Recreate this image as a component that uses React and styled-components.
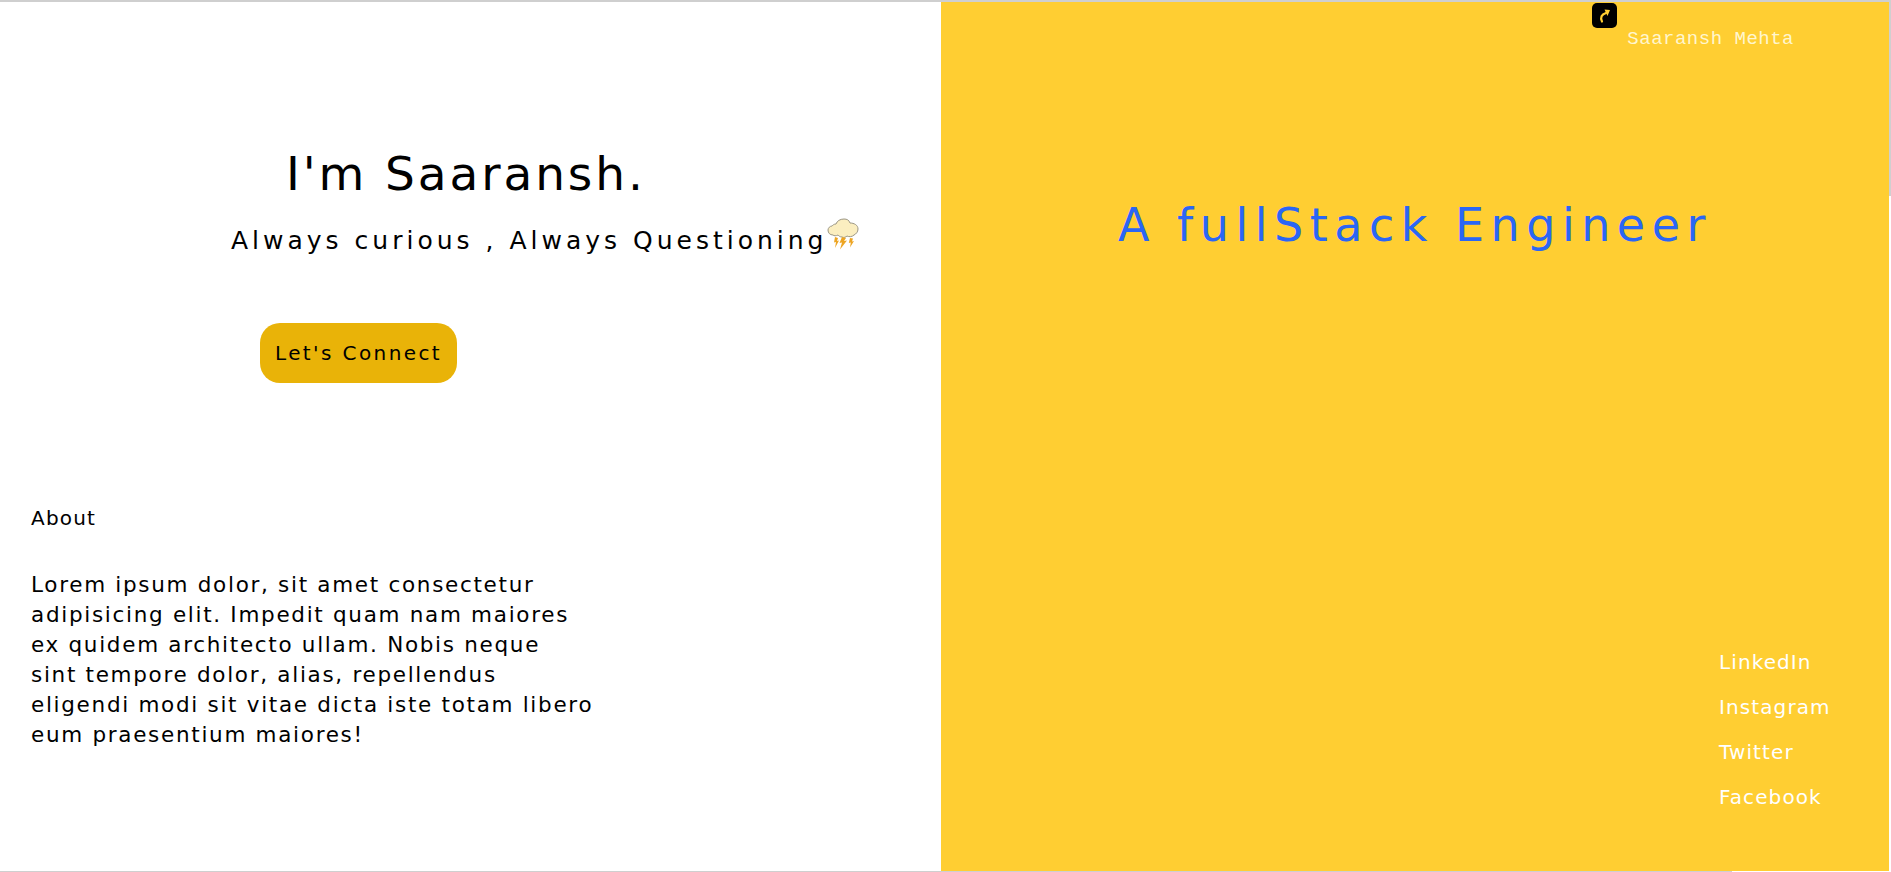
import React from 'react';
import styled, { createGlobalStyle } from 'styled-components';

const GlobalStyle = createGlobalStyle`
  html, body {
    margin: 0;
    padding: 0;
    background: #fff;
    overflow: hidden;
  }

  body {
    font-family: "DejaVu Sans", sans-serif;
  }
`;

const Page = styled.div`
  display: flex;
  flex-direction: column;
  width: 1891px;
  height: 872px;
  box-sizing: border-box;
  border-top: 2px solid #cfcfcf;
`;

const Columns = styled.main`
  flex: 1;
  display: grid;
  grid-template-columns: 941px 1fr 2px;
`;

const BottomTrack = styled.div`
  width: 1732px;
  height: 1px;
  background: #cfcfcf;
`;

const SideTrack = styled.div`
  width: 2px;
  height: 194px;
  background: #cfcfcf;
`;

const Left = styled.section`
  display: flex;
  flex-direction: column;
  color: #000;
`;

const Hero = styled.div`
  display: flex;
  flex-direction: column;
  height: 486px;
  padding-top: 144px;
  box-sizing: border-box;
`;

const Title = styled.h1`
  margin: 0 0 0 286px;
  font-size: 47px;
  line-height: 56px;
  font-weight: 400;
  letter-spacing: 2.9px;
`;

const Tagline = styled.p`
  display: flex;
  align-items: flex-start;
  margin: 21px 0 0 231px;
  font-size: 25px;
  line-height: 36px;
  letter-spacing: 4px;
  white-space: nowrap;
`;

const Storm = styled.svg`
  width: 32px;
  height: 32px;
  margin: -5px 0 0 0;
`;

const ConnectButton = styled.button`
  width: 197px;
  height: 60px;
  margin: 64px 0 0 260px;
  padding: 0;
  border: 0;
  border-radius: 20px;
  background: #e9b308;
  color: #000;
  font-family: inherit;
  font-size: 20px;
  letter-spacing: 2.4px;
`;

const About = styled.div`
  padding-left: 31px;
`;

const AboutLabel = styled.h3`
  margin: 17px 0 0;
  font-size: 20px;
  line-height: 26px;
  font-weight: 400;
  letter-spacing: 1.2px;
`;

const AboutText = styled.p`
  width: 620px;
  margin: 39px 0 0;
  font-size: 21.5px;
  line-height: 30px;
  letter-spacing: 1.7px;
  white-space: pre-line;
`;

const Right = styled.section`
  position: relative;
  display: flex;
  flex-direction: column;
  background: #ffce32;
`;

const Badge = styled.div`
  position: absolute;
  top: 1px;
  left: 651px;
  display: flex;
  align-items: center;
  justify-content: center;
  width: 25px;
  height: 25px;
  border-radius: 5px;
  background: #000;
`;

const Owner = styled.div`
  align-self: flex-end;
  margin: 26px 95px 0 0;
  font-family: "Liberation Mono", monospace;
  font-size: 19px;
  line-height: 22px;
  letter-spacing: 0.5px;
  color: #fff6cf;
`;

const Role = styled.h2`
  margin: 145px 0 0 177px;
  font-size: 46px;
  line-height: 60px;
  font-weight: 400;
  letter-spacing: 6.5px;
  color: #2a66f5;
  white-space: nowrap;
`;

const Socials = styled.nav`
  display: flex;
  flex-direction: column;
  gap: 15px;
  margin: auto 0 59px 778px;
`;

const SocialLink = styled.a`
  font-size: 20px;
  line-height: 30px;
  letter-spacing: 1.1px;
  color: #fff;
  text-decoration: none;
`;

const StormIcon = () => (
  <Storm viewBox="0 0 32 32">
    <path
      d="M6 17c-3 0-5-2-5-5 0-2 2-4 4-4 1-1 2-2 4-2 1-3 4-5 8-5 3 0 5 1 6 4 4 0 8 2 8 6 0 3-2 5-4 6-2 2-5 2-7 1-1 1-3 2-5 1-2 0-3-1-4-2-2 1-4 1-5 0z"
      fill="#fbeec0"
      stroke="#9b9684"
      strokeWidth="1"
    />
    <path d="M8 19l3 1-1 3 2-.5-4 7.500 1-6-2 .5z" fill="#eda523" />
    <path d="M15 19l4 1-2 3 3-.5-7 9 2-7-2.500 .5z" fill="#eda523" />
    <path d="M23 20l3 .5-1 3 2-.5-4 6.500 .8-5-2 .5z" fill="#eda523" />
  </Storm>
);

const ArrowIcon = () => (
  <svg width="17" height="17" viewBox="0 0 17 17" fill="none">
    <path d="M6 14.5C4 10.5 5.5 7.5 10 6" stroke="#ffce32" strokeWidth="2.2" strokeLinecap="round" />
    <path d="M8.5 2.500L14 3l-2.500 6z" fill="#ffce32" />
  </svg>
);

const links = ['LinkedIn', 'Instagram', 'Twitter', 'Facebook'];

const about = `Lorem ipsum dolor, sit amet consectetur
adipisicing elit. Impedit quam nam maiores
ex quidem architecto ullam. Nobis neque
sint tempore dolor, alias, repellendus
eligendi modi sit vitae dicta iste totam libero
eum praesentium maiores!`;

const App = () => (
  <>
    <GlobalStyle />
    <Page>
      <Columns>
        <Left>
          <Hero>
            <Title>I'm Saaransh.</Title>
            <Tagline>
              Always curious , Always Questioning
              <StormIcon />
            </Tagline>
            <ConnectButton>Let's Connect</ConnectButton>
          </Hero>
          <About>
            <AboutLabel>About</AboutLabel>
            <AboutText>{about}</AboutText>
          </About>
        </Left>
        <Right>
          <Badge>
            <ArrowIcon />
          </Badge>
          <Owner>Saaransh Mehta</Owner>
          <Role>A fullStack Engineer</Role>
          <Socials>
            {links.map((link) => (
              <SocialLink href="#" key={link}>
                {link}
              </SocialLink>
            ))}
          </Socials>
        </Right>
        <SideTrack />
      </Columns>
      <BottomTrack />
    </Page>
  </>
);

export default App;
